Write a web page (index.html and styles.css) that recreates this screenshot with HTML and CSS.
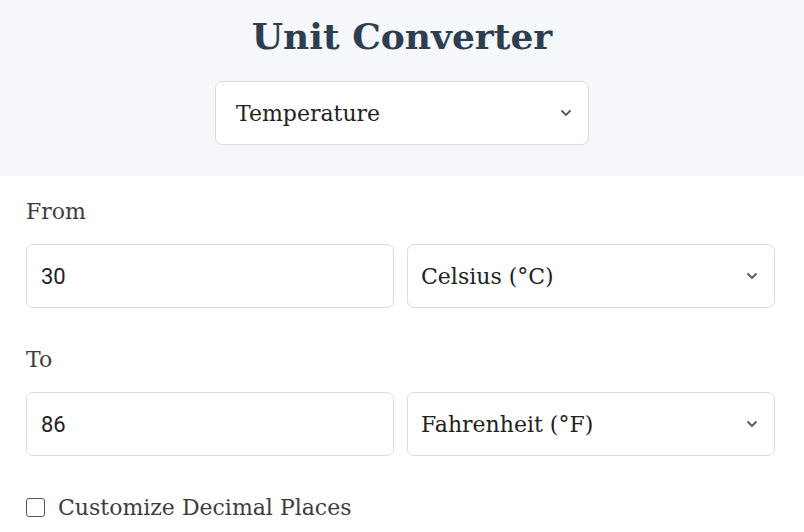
FILE: index.html
```html
<!DOCTYPE html>
<html lang="en">
<head>
  <meta charset="UTF-8">
  <meta name="viewport" content="width=device-width, initial-scale=1.0">
  <title>Unit Converter</title>
  <link rel="stylesheet" href="styles.css">
</head>
<body>

<div id="header">
  <h1>Unit Converter</h1>
  <div class="select-box" id="category">
    <span>Temperature</span>
    <svg class="chevron" viewBox="0 0 12 8" width="12" height="8"><path d="M1.5 1.5 L6 6 L10.5 1.5" /></svg>
  </div>
</div>

<div id="converter">
  <div class="label">From</div>
  <div class="row">
    <div class="input-box">30</div>
    <div class="select-box">
      <span>Celsius (°C)</span>
      <svg class="chevron" viewBox="0 0 12 8" width="12" height="8"><path d="M1.5 1.5 L6 6 L10.5 1.5" /></svg>
    </div>
  </div>

  <div class="label">To</div>
  <div class="row">
    <div class="input-box">86</div>
    <div class="select-box">
      <span>Fahrenheit (°F)</span>
      <svg class="chevron" viewBox="0 0 12 8" width="12" height="8"><path d="M1.5 1.5 L6 6 L10.5 1.5" /></svg>
    </div>
  </div>

  <label class="check-row">
    <span class="checkbox"></span>
    Customize Decimal Places
  </label>
</div>

</body>
</html>
```

FILE: styles.css
```css
body {
  margin: 0;
  font-family: "Roboto Slab", "DejaVu Serif", serif;
  background: #ffffff;
  color: #444;
}

#header {
  background-color: #f5f7fa;
  height: 176px;
  text-align: center;
  overflow: hidden;
}

h1 {
  margin: 11px 0 0;
  font-size: 36px;
  line-height: 50px;
  font-weight: bold;
  color: #2c3e50;
}

#category {
  width: 374px;
  margin: 20px auto 0;
  text-align: left;
}

.select-box {
  box-sizing: border-box;
  height: 64px;
  display: flex;
  align-items: center;
  justify-content: space-between;
  padding: 0 14px 0 20px;
  background: #fff;
  border: 1px solid #dcdcdc;
  border-radius: 7px;
  font-size: 22px;
  color: #222;
}

.row .select-box {
  padding-left: 13px;
}

.chevron {
  fill: none;
  stroke: #555;
  stroke-width: 1.8;
  margin-right: 2px;
}

#converter {
  padding: 23px 29px 0 26px;
}

.label {
  font-size: 22px;
  line-height: 26px;
  color: #3d3d3d;
  margin-bottom: 19px;
}

.row {
  display: grid;
  grid-template-columns: 1fr 1fr;
  gap: 13px;
  margin-bottom: 39px;
}

.input-box {
  box-sizing: border-box;
  height: 64px;
  display: flex;
  align-items: center;
  padding-left: 14px;
  border: 1px solid #dcdcdc;
  border-radius: 7px;
  font-family: Roboto, "Liberation Sans", sans-serif;
  font-size: 22px;
  color: #222;
}

.check-row {
  display: flex;
  align-items: center;
  gap: 13px;
  font-size: 22px;
  color: #3d3d3d;
}

.checkbox {
  box-sizing: border-box;
  width: 19px;
  height: 19px;
  border: 1.5px solid #555;
  border-radius: 3px;
  background: #fff;
}
```
